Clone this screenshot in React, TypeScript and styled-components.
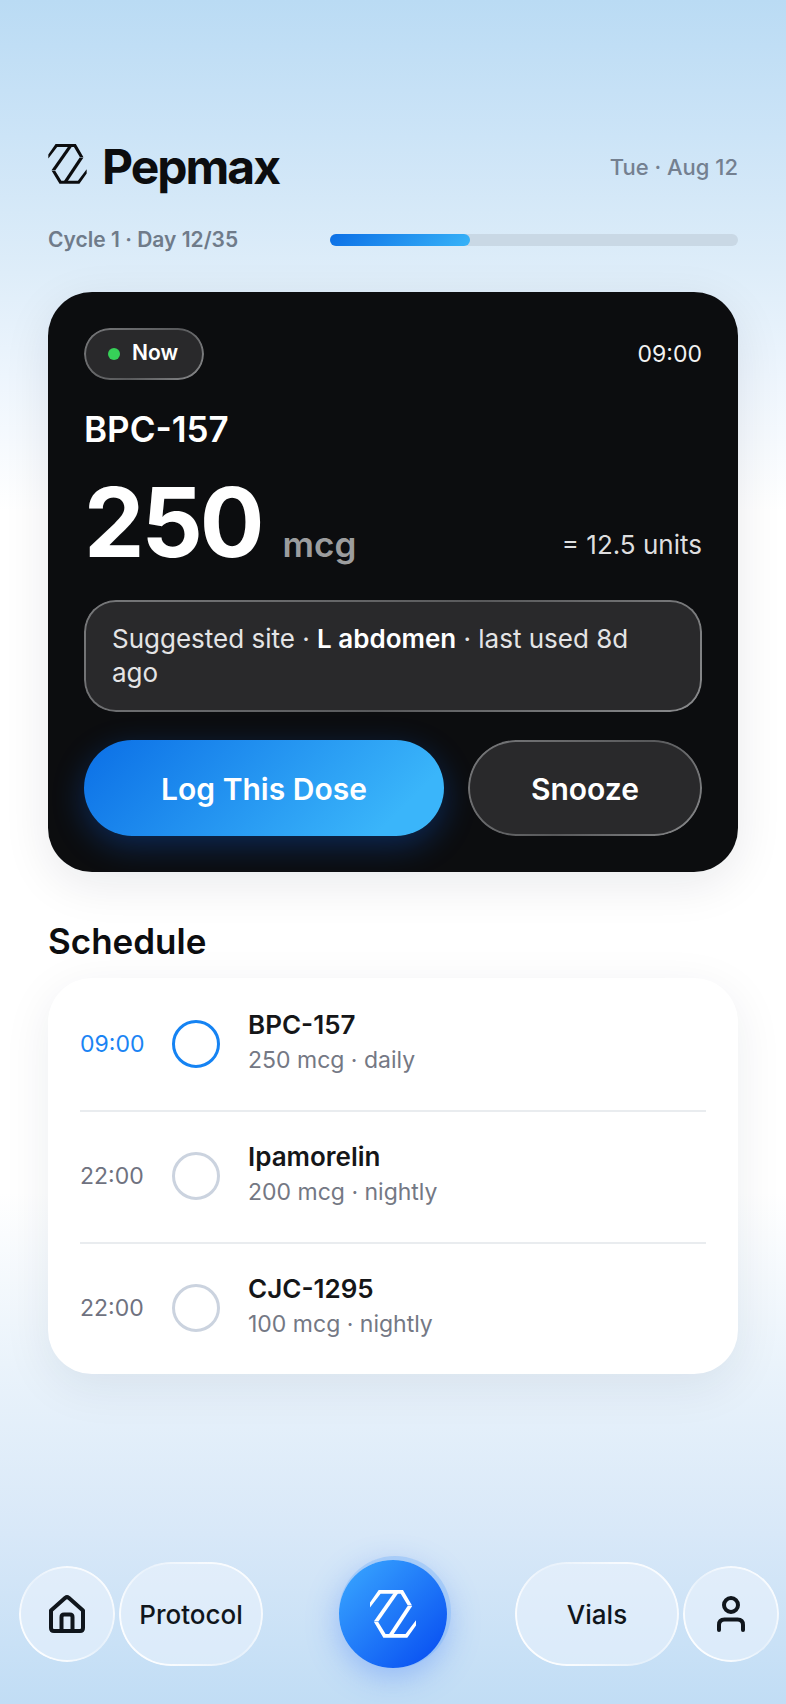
import React from 'react';
import styled, { createGlobalStyle, css } from 'styled-components';

const GlobalStyle = createGlobalStyle`
  * { box-sizing: border-box; }
  body {
    margin: 0;
    font-family: Inter, "Liberation Sans", sans-serif;
    color: #0c0d0f;
    -webkit-font-smoothing: antialiased;
  }
  h1, h2, h3, p, ul { margin: 0; padding: 0; font: inherit; }
  button, input { font: inherit; margin: 0; }
`;

const Page = styled.div`
  min-height: 100vh;
  display: flex;
  flex-direction: column;
  background: linear-gradient(
    180deg,
    #badbf4 0%,
    #cce4f7 8%,
    #deedf9 16%,
    #edf5fd 22%,
    #ffffff 30%,
    #ffffff 70%,
    #eaf3fb 80%,
    #d8e8f8 90%,
    #c1ddf5 100%
  );
`;

const Main = styled.main`
  padding: 139px 48px 48px;
`;

const Header = styled.header`
  display: flex;
  justify-content: space-between;
  align-items: center;
`;

const Brand = styled.div`
  display: flex;
  align-items: center;
  gap: 15px;
`;

const LogoMark = styled.svg`
  display: block;
  flex: none;
  fill: currentColor;
`;

const BrandLogo = styled.div`
  padding-bottom: 6px;
`;

const BrandName = styled.h1`
  font-size: 48px;
  line-height: 56px;
  font-weight: 700;
  letter-spacing: -2px;
`;

const DateText = styled.time`
  font-size: 22px;
  line-height: 28px;
  font-weight: 500;
  color: #748090;
`;

const CycleRow = styled.div`
  display: grid;
  grid-template-columns: 282px 1fr;
  align-items: center;
  margin-top: 30px;
`;

const CycleText = styled.p`
  padding-top: 1px;
  font-size: 21px;
  line-height: 28px;
  font-weight: 600;
  color: #6f7b8a;
`;

const Track = styled.div`
  height: 12px;
  border-radius: 6px;
  background: #c9d8e5;
`;

const Fill = styled.div`
  height: 100%;
  border-radius: 6px;
  background: linear-gradient(135deg, #0b6fe6 0%, #38b3f8 100%);
`;

const DoseCard = styled.section`
  margin-top: 38px;
  padding: 36px;
  border-radius: 44px;
  background: #0c0d0f;
  color: #fff;
  box-shadow: 0 12px 48px rgba(15, 23, 42, 0.09);
`;

const glassRim = css<{ $rim: string }>`
  position: relative;
  &::before {
    content: '';
    position: absolute;
    inset: 0;
    padding: 2px;
    border-radius: inherit;
    background: ${(p) => p.$rim};
    mask: linear-gradient(#000 0 0) content-box exclude, linear-gradient(#000 0 0);
    pointer-events: none;
  }
`;

const DARK_RIM =
  'linear-gradient(135deg, #77787a 0%, #626365 40%, #58595b 55%, #8a8b8d 100%)';
const LIGHT_RIM =
  'linear-gradient(45deg, rgba(255,255,255,1) 0%, rgba(255,255,255,.8) 25%, rgba(255,255,255,.25) 50%, rgba(255,255,255,.7) 75%, rgba(255,255,255,.9) 100%)';

const Between = styled.div`
  display: flex;
  justify-content: space-between;
  align-items: center;
`;

const Badge = styled.span`
  ${glassRim}
  display: flex;
  align-items: center;
  gap: 12px;
  height: 52px;
  padding: 0 26px 0 24px;
  border-radius: 26px;
  background: #29292b;
`;

const Dot = styled.span`
  width: 12px;
  height: 12px;
  border-radius: 50%;
  background: #36d158;
`;

const BadgeText = styled.span`
  padding-bottom: 2px;
  font-size: 21px;
  line-height: 28px;
  font-weight: 600;
`;

const DoseTime = styled.time`
  font-size: 23px;
  line-height: 28px;
  color: #f2f2f2;
`;

const DoseName = styled.h2`
  margin-top: 28px;
  font-size: 35px;
  line-height: 42px;
  font-weight: 600;
`;

const DoseRow = styled.div`
  display: flex;
  justify-content: space-between;
  align-items: flex-end;
  margin-top: 24px;
`;

const Amount = styled.p`
  display: flex;
  align-items: baseline;
  gap: 21px;
  font-size: 96px;
  line-height: 96px;
  font-weight: 700;
  letter-spacing: -3px;
`;

const Unit = styled.span`
  font-size: 35px;
  line-height: 42px;
  font-weight: 600;
  letter-spacing: 0;
  color: #9c9d9e;
`;

const Equivalent = styled.p`
  margin-bottom: 9px;
  font-size: 26px;
  line-height: 32px;
  color: #dededf;
`;

const SiteNote = styled.p`
  ${glassRim}
  margin-top: 30px;
  padding: 22px 28px;
  border-radius: 32px;
  background: #29292b;
  font-size: 26px;
  line-height: 34px;
  color: #e4e4e5;

  strong {
    font-weight: 600;
    color: #fff;
  }
`;

const Actions = styled.div`
  display: grid;
  grid-template-columns: 20fr 13fr;
  gap: 24px;
  margin-top: 28px;
`;

const actionBase = css`
  height: 96px;
  padding: 2px 0 0;
  border: 0;
  border-radius: 48px;
  color: #fff;
  font-size: 30px;
  font-weight: 600;
  cursor: pointer;
`;

const PrimaryButton = styled.button`
  ${actionBase}
  background: linear-gradient(135deg, #0b6fe6 0%, #3ab5fa 85%);
  box-shadow: 0 10px 32px rgba(11, 100, 235, 0.32);
`;

const GlassButton = styled.button`
  ${actionBase}
  ${glassRim}
  background: #29292b;
`;

const SectionTitle = styled.h2`
  margin: 47px 0 15px;
  font-size: 35px;
  line-height: 44px;
  font-weight: 600;
`;

const ScheduleCard = styled.ul`
  list-style: none;
  padding: 0 32px;
  border-radius: 44px;
  background: #fff;
  box-shadow: 0 12px 48px rgba(15, 40, 70, 0.08);
`;

const ScheduleItem = styled.li`
  & + & {
    box-shadow: inset 0 2px #e9ecef;
  }
`;

const ScheduleRow = styled.label`
  display: flex;
  align-items: center;
  height: 132px;
  cursor: pointer;
`;

const RowTime = styled.time<{ $current?: boolean }>`
  width: 92px;
  font-size: 23px;
  line-height: 28px;
  color: ${(p) => (p.$current ? '#1a84f4' : '#6f7280')};
`;

const Check = styled.input<{ $current?: boolean }>`
  appearance: none;
  flex: none;
  width: 48px;
  height: 48px;
  border: 3px solid ${(p) => (p.$current ? '#1583f3' : '#cbd3df')};
  border-radius: 50%;
  background: #fff;
  cursor: pointer;
`;

const RowBody = styled.span`
  display: flex;
  flex-direction: column;
  margin-left: 28px;
`;

const RowName = styled.span`
  font-size: 26px;
  line-height: 32px;
  font-weight: 600;
  color: #151618;
`;

const RowDetail = styled.span`
  font-size: 23px;
  line-height: 38px;
  color: #747884;
`;

const TabBar = styled.nav`
  display: grid;
  grid-template-columns: 1fr auto 1fr;
  align-items: center;
  margin-top: auto;
  padding-bottom: 36px;
`;

const TabGroup = styled.div<{ $end?: boolean }>`
  display: flex;
  align-items: center;
  gap: 4px;
  justify-content: ${(p) => (p.$end ? 'flex-end' : 'flex-start')};
  padding: ${(p) => (p.$end ? '0 7px 0 0' : '0 0 0 19px')};
`;

const Tab = styled.a<{ $round?: boolean; $wide?: boolean }>`
  ${glassRim}
  display: flex;
  align-items: center;
  justify-content: center;
  width: ${(p) => (p.$round ? 96 : p.$wide ? 164 : 144)}px;
  height: ${(p) => (p.$round ? 96 : 104)}px;
  border-radius: 52px;
  background: rgba(239, 246, 254, 0.5);
  color: #10161c;
  font-size: 26px;
  font-weight: 500;
  text-decoration: none;
`;

const CenterButton = styled.button`
  display: flex;
  align-items: center;
  justify-content: center;
  width: 108px;
  height: 108px;
  padding: 0;
  border: 0;
  border-radius: 50%;
  color: #fff;
  background: linear-gradient(135deg, #38a5ff 5%, #0a52f2 90%);
  box-shadow: 2px -2px 0 2px rgba(120, 180, 250, 0.4), 0 8px 32px rgba(60, 120, 250, 0.4);
  cursor: pointer;
`;

const StrokeIcon = styled.svg`
  fill: none;
  stroke: currentColor;
  stroke-width: 4;
  stroke-linecap: round;
  stroke-linejoin: round;
`;

const Logo = ({ width, height }: { width: number; height: number }) => (
  <LogoMark width={width} height={height} viewBox="0 0 46 48" aria-hidden="true">
    <path d="M0 12.5 8.7 0H33L42 15.6H37.8L30.7 3.7H10.6L0 17.5Z" />
    <path d="M37.6 16.1H42.2L22.4 46H17.8Z" />
    <path d="M24.4 2H29L8.4 31.6H3.8Z" />
    <path d="M4 32.1H8.2L15.6 44.1H35.5L46 30.3V35.5L37.3 47.8H13.4Z" />
  </LogoMark>
);

const HomeIcon = () => (
  <StrokeIcon width="36" height="38" viewBox="0 0 36 38" aria-hidden="true">
    <path d="M2 15.5 16.3 2.8Q18 1.5 19.7 2.8L34 15.5V33Q34 36 31 36H5Q2 36 2 33Z" />
    <path d="M12.5 36V22Q12.5 19.5 15 19.5H21Q23.5 19.5 23.5 22V36" />
  </StrokeIcon>
);

const UserIcon = () => (
  <StrokeIcon width="30" height="36" viewBox="0 0 30 36" aria-hidden="true">
    <circle cx="15" cy="9" r="7" />
    <path d="M3 34V29Q3 23.5 8.5 23.5H21.5Q27 23.5 27 29V34" />
  </StrokeIcon>
);

const cycle = { number: 1, day: 12, length: 35 };

const schedule = [
  { time: '09:00', name: 'BPC-157', detail: '250 mcg · daily', current: true },
  { time: '22:00', name: 'Ipamorelin', detail: '200 mcg · nightly' },
  { time: '22:00', name: 'CJC-1295', detail: '100 mcg · nightly' },
];

export default function App() {
  return (
    <>
      <GlobalStyle />
      <Page>
        <Main>
          <Header>
            <Brand>
              <BrandLogo>
                <Logo width={39} height={40} />
              </BrandLogo>
              <BrandName>Pepmax</BrandName>
            </Brand>
            <DateText>Tue · Aug 12</DateText>
          </Header>

          <CycleRow>
            <CycleText id="cycle">
              Cycle {cycle.number} · Day {cycle.day}/{cycle.length}
            </CycleText>
            <Track
              role="progressbar"
              aria-labelledby="cycle"
              aria-valuemin={0}
              aria-valuemax={cycle.length}
              aria-valuenow={cycle.day}
            >
              <Fill style={{ width: `${(cycle.day / cycle.length) * 100}%` }} />
            </Track>
          </CycleRow>

          <DoseCard>
            <Between>
              <Badge $rim={DARK_RIM}>
                <Dot />
                <BadgeText>Now</BadgeText>
              </Badge>
              <DoseTime>09:00</DoseTime>
            </Between>
            <DoseName>BPC-157</DoseName>
            <DoseRow>
              <Amount>
                250<Unit>mcg</Unit>
              </Amount>
              <Equivalent>= 12.5 units</Equivalent>
            </DoseRow>
            <SiteNote $rim={DARK_RIM}>
              Suggested site · <strong>L abdomen</strong> · last used 8d ago
            </SiteNote>
            <Actions>
              <PrimaryButton type="button">Log This Dose</PrimaryButton>
              <GlassButton type="button" $rim={DARK_RIM}>
                Snooze
              </GlassButton>
            </Actions>
          </DoseCard>

          <SectionTitle>Schedule</SectionTitle>
          <ScheduleCard>
            {schedule.map((dose) => (
              <ScheduleItem key={dose.name}>
                <ScheduleRow>
                  <RowTime $current={dose.current}>{dose.time}</RowTime>
                  <Check type="checkbox" $current={dose.current} />
                  <RowBody>
                    <RowName>{dose.name}</RowName>
                    <RowDetail>{dose.detail}</RowDetail>
                  </RowBody>
                </ScheduleRow>
              </ScheduleItem>
            ))}
          </ScheduleCard>
        </Main>

        <TabBar aria-label="Main">
          <TabGroup>
            <Tab href="#home" aria-label="Home" $round $rim={LIGHT_RIM}>
              <HomeIcon />
            </Tab>
            <Tab href="#protocol" $rim={LIGHT_RIM}>
              Protocol
            </Tab>
          </TabGroup>
          <CenterButton type="button" aria-label="Quick log">
            <Logo width={46} height={48} />
          </CenterButton>
          <TabGroup $end>
            <Tab href="#vials" $wide $rim={LIGHT_RIM}>
              Vials
            </Tab>
            <Tab href="#profile" aria-label="Profile" $round $rim={LIGHT_RIM}>
              <UserIcon />
            </Tab>
          </TabGroup>
        </TabBar>
      </Page>
    </>
  );
}
